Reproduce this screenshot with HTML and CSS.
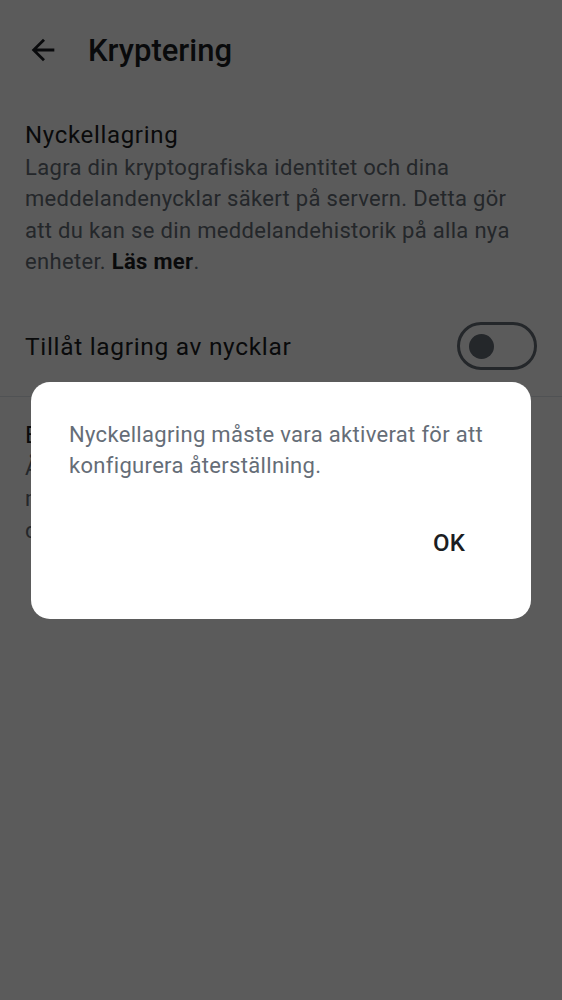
FILE: index.html
```html
<!DOCTYPE html>
<html lang="sv">
<head>
<meta charset="utf-8">
<title>Kryptering</title>
<link rel="stylesheet" href="styles.css">
</head>
<body>
<div class="screen">
  <header class="topbar">
    <button class="back" aria-label="Tillbaka">
      <svg width="34" height="34" viewBox="0 0 24 24"><path d="M20 11H7.83l5.59-5.59L12 4l-8 8 8 8 1.41-1.41L7.83 13H20v-2z" fill="#1b1d22"/></svg>
    </button>
    <h1 class="title">Kryptering</h1>
  </header>

  <section class="section">
    <h2 class="heading">Nyckellagring</h2>
    <p class="desc">Lagra din kryptografiska identitet och dina meddelandenycklar säkert på servern. Detta gör att du kan se din meddelandehistorik på alla nya enheter. <b>Läs mer</b>.</p>
  </section>

  <div class="row">
    <span class="label">Tillåt lagring av nycklar</span>
    <span class="toggle"><span class="thumb"></span></span>
  </div>

  <div class="divider"></div>

  <section class="section second">
    <h2 class="heading">Backup</h2>
    <p class="desc">Återställ din kryptografiska identitet och meddelandehistorik med en säkerhetsnyckel om du har förlorat alla befintliga enheter.</p>
  </section>
</div>

<div class="scrim">
  <div class="dialog" role="dialog">
    <p class="dialog-text">Nyckellagring måste vara aktiverat för att konfigurera återställning.</p>
    <div class="actions">
      <button class="ok">OK</button>
    </div>
  </div>
</div>
</body>
</html>
```

FILE: styles.css
```css
* { box-sizing: border-box; }
html, body { margin: 0; padding: 0; }
body {
  background: #ffffff;
  font-family: Roboto, "Liberation Sans", sans-serif;
  color: #1b1d22;
  width: 562px;
  height: 1000px;
  overflow: hidden;
}
.screen { display: flex; flex-direction: column; }

.topbar {
  height: 100px;
  display: flex;
  align-items: center;
  padding-left: 26px;
  gap: 28px;
}
.back {
  border: 0; background: none; padding: 0;
  width: 34px; height: 34px;
  display: flex;
}
.title {
  margin: 0;
  font-size: 31px;
  font-weight: 500;
  letter-spacing: 0;
  color: #1b1d22;
}

.section { padding: 20px 25px 0; }
.heading {
  margin: 0;
  font-size: 24px;
  font-weight: 400;
  line-height: 30px;
  letter-spacing: 0.68px;
  color: #1b1d22;
}
.desc {
  margin: 2px 0 0;
  font-size: 22px;
  line-height: 31.3px;
  letter-spacing: 0.32px;
  color: #656d77;
}
.desc b { color: #1b1d22; font-weight: 700; }

.row {
  display: flex;
  align-items: center;
  justify-content: space-between;
  padding: 0 25px;
  margin-top: 41px;
  height: 56px;
}
.label { font-size: 24.5px; letter-spacing: 0.68px; color: #1b1d22; }
.toggle {
  width: 80px; height: 48px;
  border: 3px solid #656d77;
  border-radius: 24px;
  display: flex;
  align-items: center;
  padding-left: 9px;
}
.thumb {
  width: 25px; height: 25px;
  border-radius: 50%;
  background: #656d77;
}

.divider { height: 1px; background: #e1e6ec; margin-top: 22px; }
.second { padding-top: 23px; padding-right: 40px; }

.scrim {
  position: fixed;
  inset: 0;
  background: rgba(0, 0, 0, 0.643);
  display: flex;
  align-items: center;
  justify-content: center;
}
.dialog {
  width: 500px;
  height: 237px;
  background: #ffffff;
  border-radius: 19px;
  padding: 37px 38px 0;
  display: flex;
  flex-direction: column;
}
.dialog-text {
  margin: 0;
  font-size: 22px;
  line-height: 31px;
  letter-spacing: 0.32px;
  color: #656d77;
}
.actions {
  display: flex;
  justify-content: flex-end;
  margin-top: 35px;
}
.ok {
  border: 0; background: none;
  font-family: Roboto, "Liberation Sans", sans-serif;
  font-size: 24px;
  font-weight: 500;
  letter-spacing: 0.1px;
  color: #1b1d22;
  height: 54px;
  padding: 0 28px;
}
```
